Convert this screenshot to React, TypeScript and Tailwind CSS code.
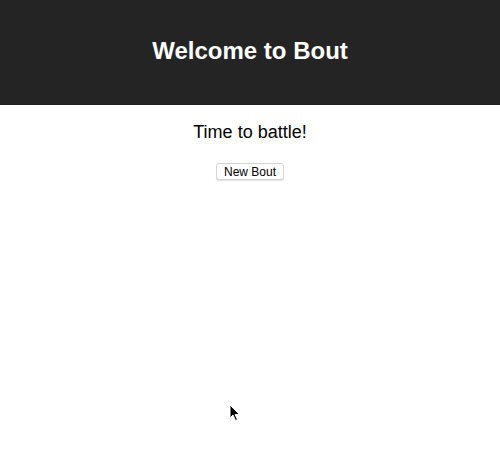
export default function App() {
    return (
        <div className="relative min-h-[474px] bg-white font-['Liberation_Sans',Arial,sans-serif] text-black">
            {/* Header */}
            <header className="h-[105px] bg-[#242424] flex items-center justify-center pb-[4px]">
                <h1 className="text-[24px] font-bold text-white leading-none">Welcome to Bout</h1>
            </header>

            <div className="flex flex-col items-center">
                <p className="mt-[14px] text-[18px] leading-[27px]">Time to battle!</p>
                <button className="mt-[17px] h-[17px] px-[7px] rounded-[3px] border border-[#d4d4d4] bg-white text-[12px] leading-none shadow-[0_1px_1px_rgba(0,0,0,0.12)]">
                    New Bout
                </button>
            </div>

            {/* mouse cursor */}
            <svg className="absolute left-[229px] top-[404px]" width="12" height="18" viewBox="0 0 12 18">
                <path d="M1 1 L1 14 L4 11 L6.5 16.5 L8.5 15.5 L6 10.5 L10.5 10.5 Z" fill="#000" stroke="#fff" strokeWidth="1" />
            </svg>
        </div>
    );
}
